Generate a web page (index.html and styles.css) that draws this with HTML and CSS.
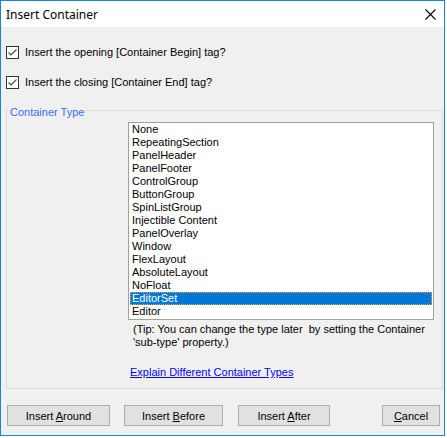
FILE: index.html
```
<!DOCTYPE html>
<html lang="en">
<head>
    <meta charset="UTF-8">
    <title>Insert Container</title>
    <link rel="stylesheet" href="styles.css">
</head>
<body>
    <div class="window">
        <div class="titlebar">
            <span class="title">Insert Container</span>
            <svg class="close" width="11" height="11" viewBox="0 0 11 11">
                <path d="M0.5 0.5 L10.5 10.5 M10.5 0.5 L0.5 10.5" stroke="#000" stroke-width="1.1" fill="none"/>
            </svg>
        </div>

        <div class="content">
            <label class="check first">
                <span class="box">
                    <svg width="11" height="11" viewBox="0 0 11 11">
                        <path d="M1.5 5.5 L4 8 L9.5 2.5" stroke="#444" stroke-width="1.1" fill="none"/>
                    </svg>
                </span>
                Insert the opening [Container Begin] tag?
            </label>
            <label class="check">
                <span class="box">
                    <svg width="11" height="11" viewBox="0 0 11 11">
                        <path d="M1.5 5.5 L4 8 L9.5 2.5" stroke="#444" stroke-width="1.1" fill="none"/>
                    </svg>
                </span>
                Insert the closing [Container End] tag?
            </label>

            <fieldset class="group">
                <legend>Container Type</legend>
                <div class="group-body">
                    <ul class="listbox">
                        <li>None</li>
                        <li>RepeatingSection</li>
                        <li>PanelHeader</li>
                        <li>PanelFooter</li>
                        <li>ControlGroup</li>
                        <li>ButtonGroup</li>
                        <li>SpinListGroup</li>
                        <li>Injectible Content</li>
                        <li>PanelOverlay</li>
                        <li>Window</li>
                        <li>FlexLayout</li>
                        <li>AbsoluteLayout</li>
                        <li>NoFloat</li>
                        <li class="selected">EditorSet</li>
                        <li>Editor</li>
                    </ul>
                    <p class="tip">(Tip: You can change the type later&nbsp; by setting the Container<br>'sub-type' property.)</p>
                    <a class="link" href="#">Explain Different Container Types</a>
                </div>
            </fieldset>

            <div class="buttons">
                <button class="btn btn-around">Insert <u>A</u>round</button>
                <button class="btn btn-before">Insert <u>B</u>efore</button>
                <button class="btn btn-after">Insert <u>A</u>fter</button>
                <button class="btn btn-cancel"><u>C</u>ancel</button>
            </div>
        </div>
    </div>
</body>
</html>
```

FILE: styles.css
```
body {
    margin: 0;
    background-color: #ffffff;
}

.window {
    width: 445px;
    height: 436px;
    border: 1px solid #1883d7;
    box-sizing: border-box;
    background-color: #f0f0f0;
    display: flex;
    flex-direction: column;
    font-family: "Liberation Sans", Arial, sans-serif;
    font-size: 11px;
    color: #000;
}

.titlebar {
    height: 26px;
    background-color: #fff;
    display: flex;
    align-items: center;
    justify-content: space-between;
    padding: 0 8px 0 5px;
    flex-shrink: 0;
}

.title {
    font-family: "Noto Sans", "Liberation Sans", sans-serif;
    font-size: 12px;
}

.close {
    display: block;
}

.content {
    flex: 1;
    padding-left: 5px;
}

.check {
    display: flex;
    align-items: center;
    height: 13px;
    line-height: 13px;
    margin-top: 17px;
}

.check.first {
    margin-top: 19px;
}

.box {
    width: 13px;
    height: 13px;
    box-sizing: border-box;
    border: 1px solid #333;
    background-color: #fff;
    margin-right: 6px;
    display: flex;
    align-items: center;
    justify-content: center;
}

.group {
    margin: 13px 1px 0 0;
    padding: 0;
    border: 1px solid #dcdcdc;
    min-width: 0;
}

.group legend {
    margin-left: 2px;
    padding: 4px 1px 0 1px;
    line-height: 13px;
    color: #3a6cf4;
}

.group-body {
    padding: 3px 0 9px 121px;
}

.listbox {
    width: 306px;
    height: 198px;
    box-sizing: border-box;
    margin: 0;
    padding: 0 1px;
    list-style: none;
    border: 1px solid #a0a0a0;
    background-color: #fff;
}

.listbox li {
    height: 13px;
    line-height: 13px;
    padding-left: 2px;
    white-space: nowrap;
}

.listbox li.selected {
    background-color: #0078d7;
    color: #fff;
    outline: 1px dotted #f7a13a;
    outline-offset: -1px;
}

.tip {
    margin: 3px 0 0 0;
    padding-left: 5px;
    line-height: 13px;
}

.link {
    display: inline-block;
    margin-top: 17px;
    margin-left: 2px;
    line-height: 13px;
    color: #0000ff;
}

.buttons {
    display: flex;
    margin-top: 16px;
    padding-left: 1px;
}

.btn {
    height: 21px;
    padding: 0;
    border: 1px solid #adadad;
    background-color: #e1e1e1;
    font-family: "Liberation Sans", Arial, sans-serif;
    font-size: 11px;
    color: #000;
}

.btn-around {
    width: 103px;
}

.btn-before {
    width: 99px;
    margin-left: 14px;
}

.btn-after {
    width: 92px;
    margin-left: 15px;
}

.btn-cancel {
    width: 58px;
    margin-left: 52px;
}
```
